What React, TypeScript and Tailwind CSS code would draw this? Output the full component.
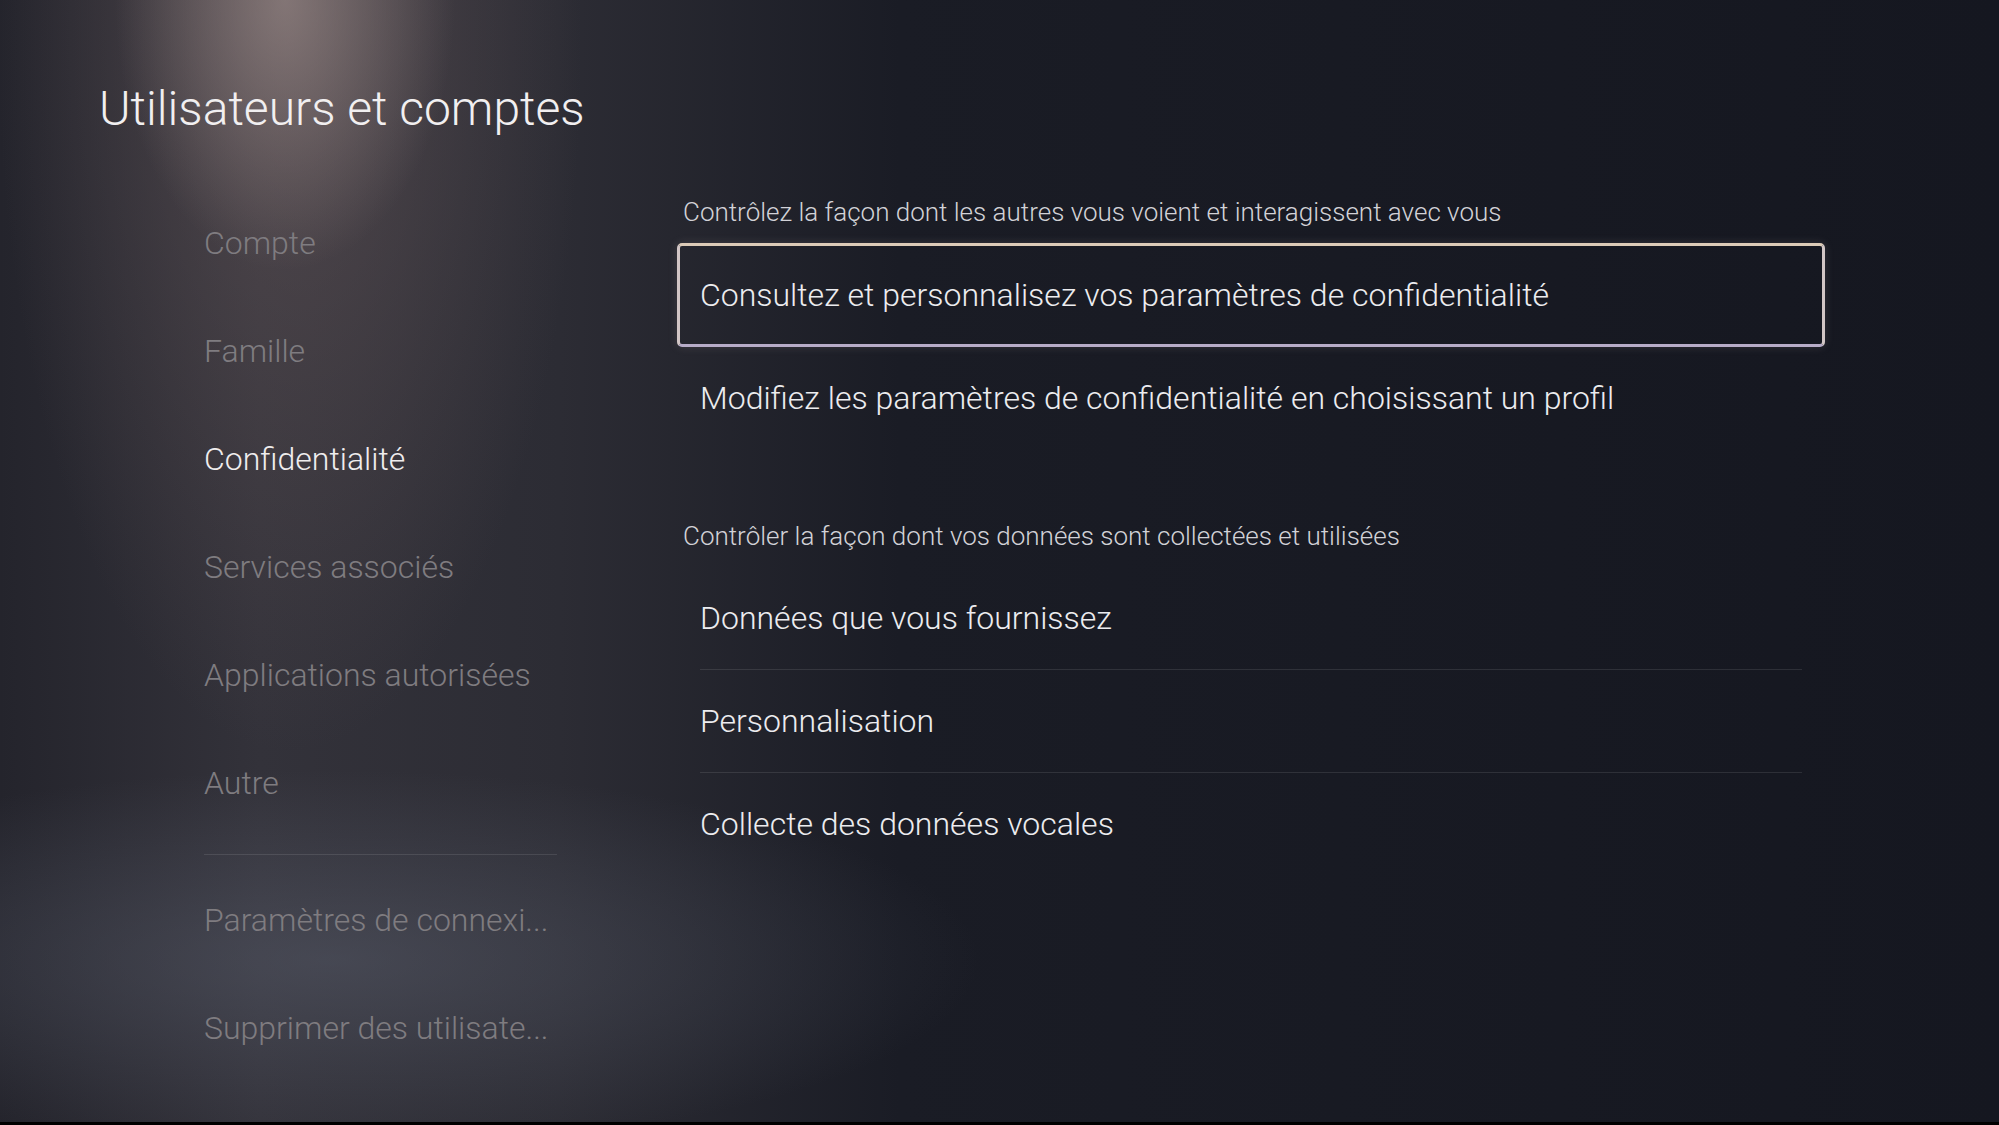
const NAV_TOP = [
  { label: "Compte", active: false },
  { label: "Famille", active: false },
  { label: "Confidentialité", active: true },
  { label: "Services associés", active: false },
  { label: "Applications autorisées", active: false },
  { label: "Autre", active: false },
];

const NAV_BOTTOM = ["Paramètres de connexi...", "Supprimer des utilisate..."];

const SECTION_DATA = [
  "Données que vous fournissez",
  "Personnalisation",
  "Collecte des données vocales",
];

function NavItem({ label, active }: { label: string; active?: boolean }) {
  return (
    <div
      className={`flex h-[108px] items-center text-[32px] font-light whitespace-nowrap ${
        active ? "text-[#efedee]" : "text-[#7f7c80]"
      }`}
    >
      {label}
    </div>
  );
}

function Row({ label, focused }: { label: string; focused?: boolean }) {
  return (
    <div
      className={`flex items-center rounded-[5px] border-[3px] px-[20px] text-[32px] font-light text-[#ececef] ${
        focused
          ? "h-[104px] border-[#d2c6c6] border-t-[#dccbb8] border-b-[#b7acc8] shadow-[0_0_10px_rgba(220,200,200,0.15)]"
          : "h-[102px] border-transparent"
      }`}
    >
      {label}
    </div>
  );
}

export default function App() {
  return (
    <div
      className="relative h-[1125px] w-[1999px] overflow-hidden bg-[radial-gradient(ellipse_170px_270px_at_285px_0px,rgba(165,148,145,0.6),transparent),radial-gradient(ellipse_390px_950px_at_290px_40px,rgba(105,90,92,0.55),transparent_75%),radial-gradient(ellipse_650px_190px_at_330px_960px,rgba(95,100,115,0.45),transparent),linear-gradient(to_right,#24242c_0px,#33323a_260px,#2c2c34_560px,#1a1c25_900px,#151720_100%)] text-white"
      style={{ fontFamily: "Roboto, 'Noto Sans', sans-serif" }}
    >
      <div className="h-[160px] pl-[99px] pt-[85px]">
        <h1 className="text-[48px] font-light leading-none text-[#f1eff0]">
          Utilisateurs et comptes
        </h1>
      </div>

      <div className="flex">
        <nav className="w-[677px] shrink-0 pl-[204px] pt-[29px]">
          {NAV_TOP.map((item) => (
            <NavItem key={item.label} label={item.label} active={item.active} />
          ))}
          <div className="mt-[17px] h-px w-[353px] bg-white/10" />
          <div className="mt-[11px]">
            {NAV_BOTTOM.map((label) => (
              <NavItem key={label} label={label} />
            ))}
          </div>
        </nav>

        <main className="w-[1148px] pt-[36px]">
          <div className="h-[32px] pl-[6px] text-[26px] font-light leading-[32px] text-[#d2d2d7]">
            Contrôlez la façon dont les autres vous voient et interagissent avec vous
          </div>
          <div className="mt-[15px]">
            <Row label="Consultez et personnalisez vos paramètres de confidentialité" focused />
            <Row label="Modifiez les paramètres de confidentialité en choisissant un profil" />
          </div>

          <div className="mt-[71px] h-[32px] pl-[6px] text-[26px] font-light leading-[32px] text-[#d2d2d7]">
            Contrôler la façon dont vos données sont collectées et utilisées
          </div>
          <div className="mt-[15px]">
            {SECTION_DATA.map((label, i) => (
              <div key={label}>
                <Row label={label} />
                {i < SECTION_DATA.length - 1 && (
                  <div className="mx-[23px] h-px bg-white/10" />
                )}
              </div>
            ))}
          </div>
        </main>
      </div>

      <div className="absolute bottom-0 left-0 h-[3px] w-full bg-black" />
    </div>
  );
}
